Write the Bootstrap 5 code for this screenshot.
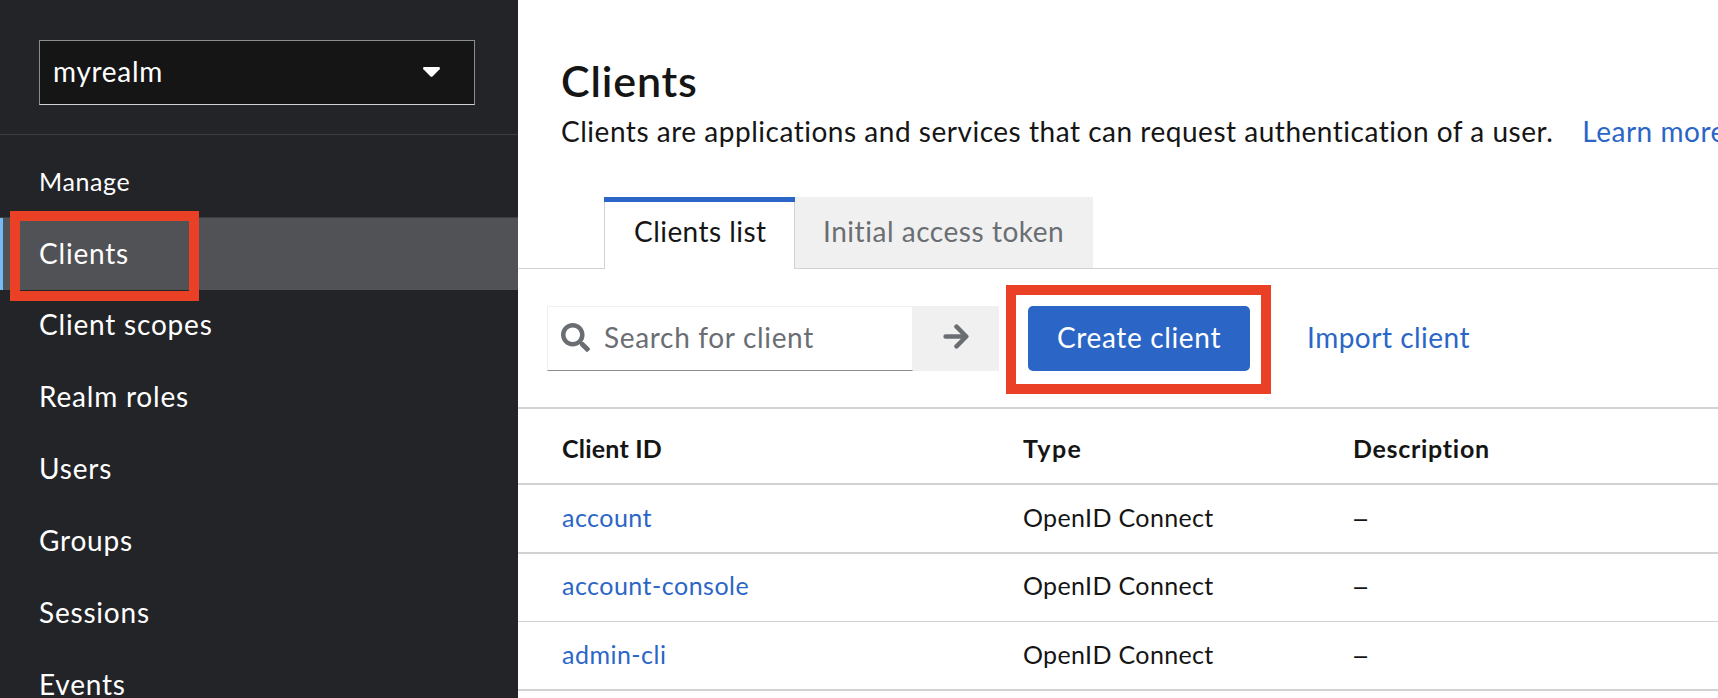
<!DOCTYPE html>
<html lang="en">
<head>
<meta charset="utf-8">
<meta name="viewport" content="width=device-width, initial-scale=1">
<title>Clients</title>
<link href="https://cdn.jsdelivr.net/npm/bootstrap@5.3.0/dist/css/bootstrap.min.css" rel="stylesheet">
<style>
  :root { --ink: #151515; --blue: #2b66c6; --line: #d2d2d2; --muted: #6a6e73; --mark: #ea4025; }
  body { font: 28px/42px Lato, "Liberation Sans", sans-serif; color: var(--ink); letter-spacing: .5px; height: 698px; overflow: hidden; white-space: nowrap; }
  a { color: var(--blue); text-decoration: none; }

  .sidebar { width: 518px; height: 698px; background: #232428; overflow: hidden; }
  .realm-area { height: 135px; padding: 40px 43px 0 39px; border-bottom: 1px solid #3c3f42; }
  .realm-select { height: 65px; width: 436px; padding: 0 34px 3px 13px; background: #151515; color: #fff; border: 1px solid #8a8d90; border-bottom-color: #d2d2d2; border-radius: 0; font-size: 28px; letter-spacing: .7px; }
  .realm-select svg { margin-top: 2px; }
  .nav-title { height: 83px; padding: 26px 0 0 39px; font-size: 25px; line-height: 40px; letter-spacing: .61px; color: #fff; border-bottom: 1px solid #3c3f42; }
  .side-link { height: 72px; padding-left: 39px; line-height: 69px; letter-spacing: .8px; color: #fff; position: relative; }
  .side-link.active { background: #515256; box-shadow: inset 3px 0 #73bcf7; line-height: 70px; }
  .marker { position: absolute; border: 10px solid var(--mark); pointer-events: none; }
  .marker-nav { left: 10px; top: -7px; width: 189px; height: 90px; }
  .marker-btn { left: -22px; top: -21px; width: 265px; height: 109px; }

  .page-head { height: 197px; padding: 55px 0 0 43px; }
  .page-head h1 { font-size: 43px; line-height: 52px; font-weight: 600; letter-spacing: .85px; margin: 0; }
  .page-head p { line-height: 49px; margin: 0; letter-spacing: .52px; }
  .page-head a { margin-left: 29px; }

  .client-tabs { height: 72px; padding-left: 86px; border-bottom: 1px solid var(--line); }
  .client-tabs .nav-link { height: 71px; border: 0; border-radius: 0; padding: 0 28px; line-height: 69px; background: #f0f0f0; color: var(--muted); letter-spacing: .54px; width: 298px; }
  .client-tabs .nav-link.active { height: 72px; width: 191px; padding-left: 30px; box-shadow: inset 0 5px var(--blue), inset 1px 0 var(--line), inset -1px 0 var(--line); background: #fff; color: var(--ink); letter-spacing: .45px; }

  .toolbar-row { height: 140px; padding: 37px 0 0 29px; border-bottom: 2px solid var(--line); }
  .search-box { width: 366px; height: 65px; border: 1px solid #f0f0f0; border-bottom-color: #8a8d90; padding: 0 0 3px 13px; color: var(--muted); }
  .search-box input { border: 0; padding: 0; margin-left: 14px; height: 60px; width: 300px; background: none; color: inherit; font: inherit; letter-spacing: .67px; outline: 0; }
  .search-box input::placeholder { color: var(--muted); opacity: 1; }
  .search-go { width: 86px; height: 65px; background: #f0f0f0; border: 0; color: var(--muted); padding: 0 1px 4px 0; }
  .create-wrap { margin-left: 29px; }
  .btn-create { width: 222px; height: 65px; padding: 0 0 3px; background: var(--blue); border: 0; color: #fff; border-radius: 5px; font-size: 28px; letter-spacing: .66px; }
  .import-link { margin-left: 57px; line-height: 63px; }

  .client-table { border-collapse: separate; border-spacing: 0; table-layout: fixed; width: 1200px; margin: 0; font-size: 25px; line-height: 40px; color: var(--ink); }
  .client-table > :not(caption) > * > * { padding: 0 0 3px; height: 69px; border-bottom: 2px solid var(--line); box-shadow: none; vertical-align: middle; background: none; color: inherit; letter-spacing: .35px; }
  .client-table > thead > tr > th { height: 76px; font-weight: 700; padding: 4px 0 0; letter-spacing: .7px; }
  .client-table > thead > tr > th:nth-child(2) { letter-spacing: 1.4px; }
  .client-table > thead > tr > th:first-child { letter-spacing: .2px; }
  .client-table > tbody > tr.thin > td { height: 68px; border-bottom-width: 1px; padding-bottom: 5px; }
  .client-table > :not(caption) > tr > :first-child { padding-left: 44px; }
  .client-table td a { letter-spacing: .48px; }
  .no-desc { font-size: 19px; font-weight: 700; line-height: 1; vertical-align: 1px; }
</style>
</head>
<body>
<div class="d-flex">
  <nav class="sidebar flex-shrink-0">
    <div class="realm-area">
      <button class="realm-select btn d-flex align-items-center justify-content-between">
        <span>myrealm</span>
        <svg width="17" height="10" viewBox="0 0 17 10" fill="#fff"><path d="M1.4 0h14.2c1.2 0 1.8 1.400 1 2.300L9.700 9.300c-.7.7-1.700.7-2.400 0L.4 2.300C-.4 1.400.2 0 1.400 0z"/></svg>
      </button>
    </div>
    <div class="nav-title">Manage</div>
    <div class="nav flex-column flex-nowrap">
      <a class="side-link active" href="#">Clients<span class="marker marker-nav"></span></a>
      <a class="side-link" href="#">Client scopes</a>
      <a class="side-link" href="#">Realm roles</a>
      <a class="side-link" href="#">Users</a>
      <a class="side-link" href="#">Groups</a>
      <a class="side-link" href="#">Sessions</a>
      <a class="side-link" href="#">Events</a>
    </div>
  </nav>

  <main class="flex-grow-1 overflow-hidden">
    <header class="page-head">
      <h1>Clients</h1>
      <p>Clients are applications and services that can request authentication of a user.<a href="#">Learn more</a></p>
    </header>

    <div class="client-tabs nav flex-nowrap">
      <a class="nav-link active" href="#">Clients list</a>
      <a class="nav-link" href="#">Initial access token</a>
    </div>

    <div class="toolbar-row d-flex align-items-start">
      <div class="search-box d-flex align-items-center">
        <svg width="29" height="29" viewBox="0 0 512 512" fill="currentColor"><path d="M505 442.700L405.300 343c-4.500-4.500-10.600-7-17-7H372c27.600-35.300 44-79.700 44-128C416 93.100 322.900 0 208 0S0 93.100 0 208s93.100 208 208 208c48.300 0 92.700-16.400 128-44v16.300c0 6.400 2.500 12.500 7 17l99.700 99.700c9.400 9.400 24.600 9.400 33.900 0l28.300-28.300c9.400-9.400 9.400-24.600.1-34zM208 336c-70.700 0-128-57.200-128-128 0-70.700 57.200-128 128-128 70.700 0 128 57.200 128 128 0 70.700-57.200 128-128 128z"/></svg>
        <input type="text" placeholder="Search for client">
      </div>
      <button class="search-go d-flex align-items-center justify-content-center">
        <svg width="26" height="25" viewBox="0 0 26 25" fill="none" stroke="currentColor" stroke-width="4.500" stroke-linecap="round" stroke-linejoin="round"><path d="M2.600 12.500H22M13.500 2.700l9.800 9.800-9.800 9.800"/></svg>
      </button>
      <div class="position-relative create-wrap">
        <button class="btn btn-create">Create client</button>
        <span class="marker marker-btn"></span>
      </div>
      <a class="import-link" href="#">Import client</a>
    </div>

    <table class="table client-table">
      <colgroup><col width="505"><col width="330"><col></colgroup>
      <thead>
        <tr><th>Client ID</th><th>Type</th><th>Description</th></tr>
      </thead>
      <tbody>
        <tr><td><a href="#">account</a></td><td>OpenID Connect</td><td><span class="no-desc">—</span></td></tr>
        <tr class="thin"><td><a href="#">account-console</a></td><td>OpenID Connect</td><td><span class="no-desc">—</span></td></tr>
        <tr><td><a href="#">admin-cli</a></td><td>OpenID Connect</td><td><span class="no-desc">—</span></td></tr>
      </tbody>
    </table>
  </main>
</div>
<script src="https://cdn.jsdelivr.net/npm/bootstrap@5.3.0/dist/js/bootstrap.bundle.min.js"></script>
</body>
</html>
